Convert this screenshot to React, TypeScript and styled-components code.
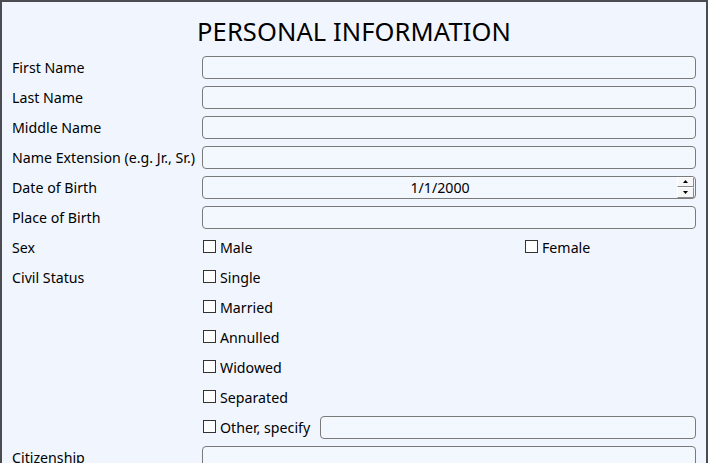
import React from "react";
import styled, { createGlobalStyle } from "styled-components";

const Global = createGlobalStyle`
  html, body { margin: 0; padding: 0; background: #f0f5fe; overflow: hidden; }
  body { font-family: "Noto Sans", "Open Sans", sans-serif; color: #000; }
`;

const Window = styled.div`
  box-sizing: border-box;
  width: 708px;
  min-height: 520px;
  background: #f1f6fe;
  border: 2px solid #4b4b52;
  border-bottom: none;
  padding: 0 10px 0 10px;
`;

const Title = styled.h1`
  margin: 0;
  height: 50px;
  display: flex;
  align-items: center;
  justify-content: center;
  padding-top: 8px;
  box-sizing: border-box;
  font-size: 25.5px;
  font-weight: 400;
  letter-spacing: 0.1px;
`;

const Form = styled.div`
  display: grid;
  grid-template-columns: 190px 1fr;
  grid-auto-rows: 30px;
  align-items: center;
`;

const Label = styled.div<{ $span?: number }>`
  font-size: 14.2px;
  line-height: 30px;
  padding-top: 1px;
  align-self: start;
  grid-row: span ${(p) => p.$span ?? 1};
  white-space: nowrap;
`;

const TextBox = styled.div`
  box-sizing: border-box;
  height: 23px;
  border: 1px solid #7a7a7a;
  border-radius: 4px;
  background: #f3f7fe;
  flex: 1;
`;

const DateBox = styled(TextBox)`
  display: flex;
  align-items: center;
  position: relative;
  padding-right: 18px;
`;

const DateText = styled.span`
  flex: 1;
  text-align: center;
  font-size: 14.2px;
`;

const Spin = styled.div`
  position: absolute;
  right: 1px;
  top: 0px;
  display: flex;
  flex-direction: column;
`;

const SpinButton = styled.div`
  box-sizing: border-box;
  width: 17px;
  height: 10.5px;
  background: #f7f7f7;
  border: 1px solid #fff;
  border-right-color: #8a8a8a;
  border-bottom-color: #8a8a8a;
  display: flex;
  align-items: center;
  justify-content: center;
`;

const Cell = styled.div`
  display: flex;
  align-items: center;
  height: 30px;
`;

const Options = styled.div<{ $cols?: string; $span?: number }>`
  display: grid;
  grid-template-columns: ${(p) => p.$cols ?? "1fr"};
  grid-auto-rows: 30px;
  grid-row: span ${(p) => p.$span ?? 1};
  align-items: center;
`;

const Check = styled.label`
  display: flex;
  align-items: center;
  gap: 4px;
  font-size: 14.2px;
  padding-left: 1px;
  padding-top: 1px;
  white-space: nowrap;
`;

const Box = styled.span`
  box-sizing: border-box;
  width: 13px;
  height: 13px;
  border: 1px solid #333;
  background: #fff;
  margin-top: -2px;
`;

const OtherRow = styled.div`
  display: flex;
  align-items: center;
  gap: 10px;
`;

const Arrow = ({ up }: { up?: boolean }) => (
  <svg width="5" height="3" viewBox="0 0 5 3">
    <path d={up ? "M2.5 0 L5 3 L0 3 Z" : "M0 0 L5 0 L2.5 3 Z"} fill="#000" />
  </svg>
);

const CheckItem = ({ label }: { label: string }) => (
  <Check>
    <Box />
    {label}
  </Check>
);

export default function App() {
  return (
    <>
      <Global />
      <Window>
        <Title>PERSONAL INFORMATION</Title>
        <Form>
          <Label>First Name</Label>
          <Cell><TextBox /></Cell>
          <Label>Last Name</Label>
          <Cell><TextBox /></Cell>
          <Label>Middle Name</Label>
          <Cell><TextBox /></Cell>
          <Label>Name Extension (e.g. Jr., Sr.)</Label>
          <Cell><TextBox /></Cell>
          <Label>Date of Birth</Label>
          <Cell>
            <DateBox>
              <DateText>1/1/2000</DateText>
              <Spin>
                <SpinButton><Arrow up /></SpinButton>
                <SpinButton><Arrow /></SpinButton>
              </Spin>
            </DateBox>
          </Cell>
          <Label>Place of Birth</Label>
          <Cell><TextBox /></Cell>
          <Label>Sex</Label>
          <Options $cols="322px 1fr">
            <CheckItem label="Male" />
            <CheckItem label="Female" />
          </Options>
          <Label $span={6}>Civil Status</Label>
          <Options $span={6}>
            <CheckItem label="Single" />
            <CheckItem label="Married" />
            <CheckItem label="Annulled" />
            <CheckItem label="Widowed" />
            <CheckItem label="Separated" />
            <OtherRow>
              <CheckItem label="Other, specify" />
              <TextBox />
            </OtherRow>
          </Options>
          <Label>Citizenship</Label>
          <Cell><TextBox /></Cell>
        </Form>
      </Window>
    </>
  );
}
